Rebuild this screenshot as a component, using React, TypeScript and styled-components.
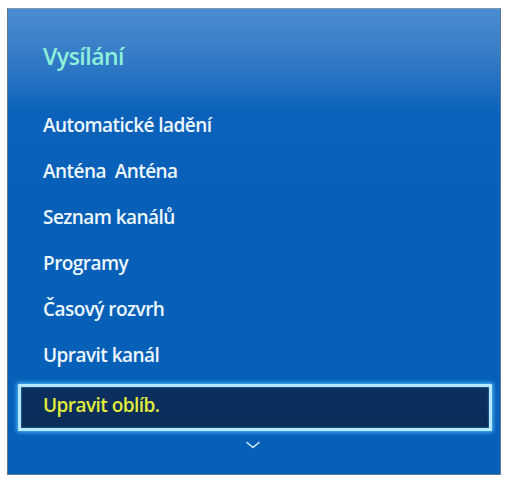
import React from "react";
import styled, { createGlobalStyle } from "styled-components";

const Global = createGlobalStyle`
  html, body { margin: 0; padding: 0; background: #ffffff; }
  body { font-family: "Open Sans", "Liberation Sans", sans-serif; }
`;

const Page = styled.div`
  padding: 8px 6px 6px 7px;
  width: 507px;
  height: 481px;
  box-sizing: border-box;
`;

const Panel = styled.div`
  width: 494px;
  height: 467px;
  box-sizing: border-box;
  border: 1px solid #5f7894;
  border-top-color: #8096ae;
  background: linear-gradient(
    to bottom,
    #4a8cd0 0%,
    #3a80c8 8%,
    #2370c2 16%,
    #0c62ba 22%,
    #0760b8 40%,
    #0660b8 100%
  );
  display: flex;
  flex-direction: column;
  padding-top: 32px;
`;

const Title = styled.div`
  font-size: 23px;
  line-height: 30px;
  font-weight: 600;
  color: #8ff0da;
  padding-left: 35px;
  letter-spacing: -0.5px;
  margin-bottom: 31px;
`;

const List = styled.div`
  display: flex;
  flex-direction: column;
`;

const Item = styled.div<{ $selected?: boolean }>`
  height: ${(p) => (p.$selected ? "47px" : "46px")};
  box-sizing: border-box;
  display: flex;
  align-items: center;
  white-space: pre;
  font-size: 19px;
  font-weight: 600;
  letter-spacing: -0.55px;
  color: ${(p) => (p.$selected ? "#e4ec3a" : "#eef7ff")};
  padding-left: ${(p) => (p.$selected ? "22px" : "35px")};
  ${(p) =>
    p.$selected &&
    `
    margin: 6px 8px 0 10px;
    padding-bottom: 6px;
    background: linear-gradient(to bottom, #0b2f60, #0a2c58);
    border: 3px solid #b6e8ff;
    box-shadow: 0 0 4px 1px #4fc0ff, inset 0 0 2px #4fa8e8;
  `}
`;

const More = styled.div`
  flex: 1;
  display: flex;
  justify-content: center;
  padding-top: 10px;
  padding-right: 2px;
`;

const items = [
  "Automatické ladění",
  "Anténa  Anténa",
  "Seznam kanálů",
  "Programy",
  "Časový rozvrh",
  "Upravit kanál",
];

export default function App() {
  return (
    <>
      <Global />
      <Page>
        <Panel>
          <Title>Vysílání</Title>
          <List>
            {items.map((t) => (
              <Item key={t}>{t}</Item>
            ))}
            <Item $selected>Upravit oblíb.</Item>
          </List>
          <More>
            <svg width="14" height="8" viewBox="0 0 14 8">
              <polyline
                points="1,1.5 7,6.5 13,1.5"
                fill="none"
                stroke="#d4ecff"
                strokeWidth="1.6"
                strokeLinecap="round"
                strokeLinejoin="round"
              />
            </svg>
          </More>
        </Panel>
      </Page>
    </>
  );
}
